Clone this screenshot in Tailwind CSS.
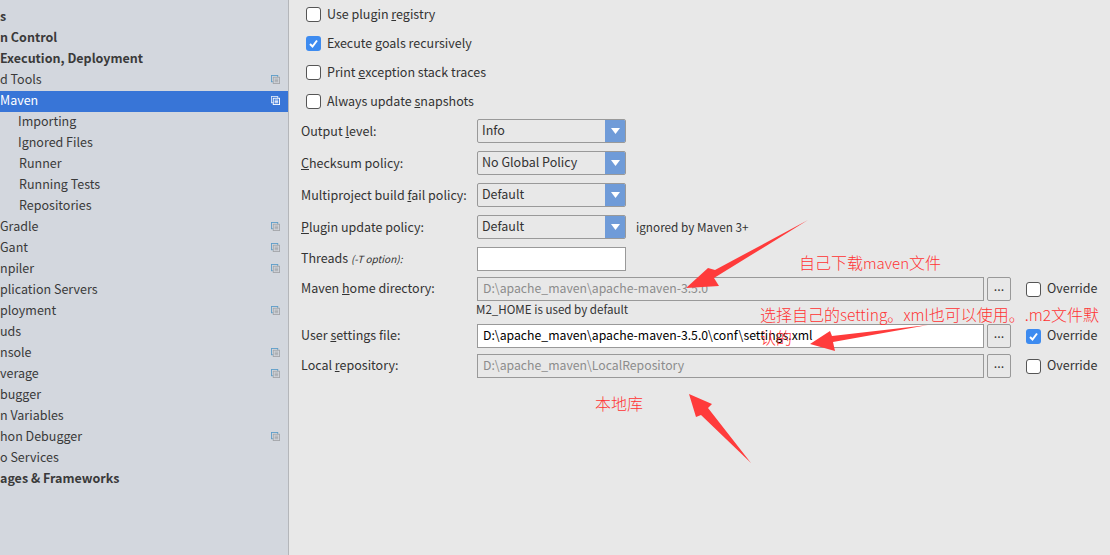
<!DOCTYPE html>
<html lang="en">
<head>
    <meta charset="UTF-8">
    <title>Maven Settings</title>
    <script src="https://cdn.jsdelivr.net/npm/@tailwindcss/browser@4"></script>
</head>
<body class="relative w-[1110px] h-[555px] overflow-hidden bg-[#e8e8e8] text-[12.5px] text-[#333] font-['Noto_Sans_CJK_SC','Noto_Sans',sans-serif]">
    <svg class="hidden">
        <symbol id="copy" viewBox="0 0 10 10">
            <rect x="0.5" y="0.5" width="7" height="7" fill="none" stroke="#5e9ec9"></rect>
            <rect x="2.5" y="2.5" width="7" height="7" fill="#d3d7de" stroke="#a3a6aa"></rect>
            <path d="M4 4.5h4M4 6h4M4 7.5h4" stroke="#a3a6aa"></path>
        </symbol>
    </svg>
    <div class="flex h-full">
        <!-- settings tree -->
        <aside class="w-[289px] h-full shrink-0 pt-[7px] bg-[#d3d7de] border-r border-[#b4b6ba] overflow-hidden leading-[18px] text-[#3a3a3a]">
            <div class="h-[21px] font-bold">s</div>
            <div class="h-[21px] font-bold">n Control</div>
            <div class="h-[21px] font-bold">Execution, Deployment</div>
            <div class="h-[21px] flex justify-between pr-[8px]"><span>d Tools</span><svg class="w-[9px] h-[9px] mt-[5px]"><use href="#copy"></use></svg></div>
            <div class="h-[21px] flex justify-between pr-[8px] bg-[#3875d7] text-white">
                <span>Maven</span>
                <svg class="w-[9px] h-[9px] mt-[5px]" viewBox="0 0 10 10"><rect x="0.5" y="0.5" width="7" height="7" fill="none" stroke="#dbe6f7"></rect><rect x="2.5" y="2.5" width="7" height="7" fill="#3875d7" stroke="#fff"></rect><path d="M4 4.5h4M4 6h4M4 7.5h4" stroke="#fff"></path></svg>
            </div>
            <div class="h-[21px] pl-[18px]">Importing</div>
            <div class="h-[21px] pl-[18px]">Ignored Files</div>
            <div class="h-[21px] pl-[19px]">Runner</div>
            <div class="h-[21px] pl-[19px]">Running Tests</div>
            <div class="h-[21px] pl-[19px]">Repositories</div>
            <div class="h-[21px] flex justify-between pr-[8px]"><span>Gradle</span><svg class="w-[9px] h-[9px] mt-[5px]"><use href="#copy"></use></svg></div>
            <div class="h-[21px] flex justify-between pr-[8px]"><span>Gant</span><svg class="w-[9px] h-[9px] mt-[5px]"><use href="#copy"></use></svg></div>
            <div class="h-[21px] flex justify-between pr-[8px]"><span>npiler</span><svg class="w-[9px] h-[9px] mt-[5px]"><use href="#copy"></use></svg></div>
            <div class="h-[21px]">plication Servers</div>
            <div class="h-[21px] flex justify-between pr-[8px]"><span>ployment</span><svg class="w-[9px] h-[9px] mt-[5px]"><use href="#copy"></use></svg></div>
            <div class="h-[21px]">uds</div>
            <div class="h-[21px] flex justify-between pr-[8px]"><span>nsole</span><svg class="w-[9px] h-[9px] mt-[5px]"><use href="#copy"></use></svg></div>
            <div class="h-[21px] flex justify-between pr-[8px]"><span>verage</span><svg class="w-[9px] h-[9px] mt-[5px]"><use href="#copy"></use></svg></div>
            <div class="h-[21px]">bugger</div>
            <div class="h-[21px]">n Variables</div>
            <div class="h-[21px] flex justify-between pr-[8px]"><span>hon Debugger</span><svg class="w-[9px] h-[9px] mt-[5px]"><use href="#copy"></use></svg></div>
            <div class="h-[21px]">o Services</div>
            <div class="h-[21px] font-bold">ages &amp; Frameworks</div>
        </aside>

        <!-- maven form -->
        <main class="flex-1 pl-[12px] leading-[20px]">
            <div class="flex items-center h-[29px] pl-[5px] gap-[6px]"><span class="w-[15px] h-[15px] rounded-[3px] border border-[#555] bg-white"></span><span class="-mt-[1px]">Use plugin <u>r</u>egistry</span></div>
            <div class="flex items-center h-[29px] pl-[5px] gap-[6px]">
                <span class="w-[15px] h-[15px] rounded-[3px] bg-[#3d8bf0] flex items-center justify-center"><svg class="w-[11px] h-[11px]" viewBox="0 0 11 11"><path d="M2 6l2.5 2.5L9 2.5" fill="none" stroke="#fff" stroke-width="2"></path></svg></span>
                <span class="-mt-[1px]">Execute <u>g</u>oals recursively</span>
            </div>
            <div class="flex items-center h-[29px] pl-[5px] gap-[6px]"><span class="w-[15px] h-[15px] rounded-[3px] border border-[#555] bg-white"></span><span class="-mt-[1px]">Print <u>e</u>xception stack traces</span></div>
            <div class="flex items-center h-[29px] pl-[5px] gap-[6px]"><span class="w-[15px] h-[15px] rounded-[3px] border border-[#555] bg-white"></span><span class="-mt-[1px]">Always update <u>s</u>napshots</span></div>

            <div class="flex flex-col gap-[8px] mt-[3px]">
                <div class="flex items-center h-[24px]">
                    <span class="w-[176px]">Output <u>l</u>evel:</span>
                    <div class="flex w-[149px] h-[24px] rounded-[2px] border border-[#999] overflow-hidden"><span class="flex-1 pl-[4px] leading-[20px]">Info</span><span class="w-[20px] bg-[#6f9bd8] flex items-center justify-center"><svg class="w-[9px] h-[6px]" viewBox="0 0 9 6"><path d="M0 0h9L4.500 6z" fill="#fff"></path></svg></span></div>
                </div>
                <div class="flex items-center h-[24px]">
                    <span class="w-[176px]"><u>C</u>hecksum policy:</span>
                    <div class="flex w-[149px] h-[24px] rounded-[2px] border border-[#999] overflow-hidden"><span class="flex-1 pl-[4px] leading-[20px]">No Global Policy</span><span class="w-[20px] bg-[#6f9bd8] flex items-center justify-center"><svg class="w-[9px] h-[6px]" viewBox="0 0 9 6"><path d="M0 0h9L4.500 6z" fill="#fff"></path></svg></span></div>
                </div>
                <div class="flex items-center h-[24px]">
                    <span class="w-[176px]">Multiproject build <u>f</u>ail policy:</span>
                    <div class="flex w-[149px] h-[24px] rounded-[2px] border border-[#999] overflow-hidden"><span class="flex-1 pl-[4px] leading-[20px]">Default</span><span class="w-[20px] bg-[#6f9bd8] flex items-center justify-center"><svg class="w-[9px] h-[6px]" viewBox="0 0 9 6"><path d="M0 0h9L4.500 6z" fill="#fff"></path></svg></span></div>
                </div>
                <div class="flex items-center h-[24px]">
                    <span class="w-[176px]"><u>P</u>lugin update policy:</span>
                    <div class="flex w-[149px] h-[24px] rounded-[2px] border border-[#999] overflow-hidden"><span class="flex-1 pl-[4px] leading-[20px]">Default</span><span class="w-[20px] bg-[#6f9bd8] flex items-center justify-center"><svg class="w-[9px] h-[6px]" viewBox="0 0 9 6"><path d="M0 0h9L4.500 6z" fill="#fff"></path></svg></span></div>
                    <span class="ml-[10px] text-[11.75px]">ignored by Maven 3+</span>
                </div>
                <div class="flex items-center h-[24px]">
                    <span class="w-[176px] -mt-[2px]">Threads <i class="text-[10px]">(-T option):</i></span>
                    <div class="w-[149px] h-[24px] border border-[#999] bg-white"></div>
                </div>
            </div>

            <div class="flex items-center h-[24px] mt-[6px]">
                <span class="w-[176px] -mt-[2px]">Maven <u>h</u>ome directory:</span>
                <div class="w-[507px] h-[24px] border border-[#999] pl-[5px] text-[12.25px] leading-[21px] text-[#8c8c8c]">D:\apache_maven\apache-maven-3.5.0</div>
                <div class="w-[24px] h-[24px] ml-[3px] rounded-[2px] border border-[#999] text-center leading-[16px]">...</div>
                <span class="w-[15px] h-[15px] ml-[15px] rounded-[3px] border border-[#555] bg-white"></span>
                <span class="ml-[6px] -mt-[2px]">Override</span>
            </div>
            <div class="h-[23px] pl-[175px] text-[11.6px] leading-[16px]">M2_HOME is used by default</div>
            <div class="flex items-center h-[24px]">
                <span class="w-[176px] -mt-[2px]">User <u>s</u>ettings file:</span>
                <div class="w-[507px] h-[24px] border border-[#999] bg-white pl-[5px] text-[12.25px] leading-[21px] text-black">D:\apache_maven\apache-maven-3.5.0\conf\settings.xml</div>
                <div class="w-[24px] h-[24px] ml-[3px] rounded-[2px] border border-[#999] text-center leading-[16px]">...</div>
                <span class="w-[15px] h-[15px] ml-[15px] rounded-[3px] bg-[#3d8bf0] flex items-center justify-center"><svg class="w-[11px] h-[11px]" viewBox="0 0 11 11"><path d="M2 6l2.500 2.500L9 2.500" fill="none" stroke="#fff" stroke-width="2"></path></svg></span>
                <span class="ml-[6px] -mt-[2px]">Override</span>
            </div>
            <div class="flex items-center h-[24px] mt-[6px]">
                <span class="w-[176px] -mt-[2px]">Local <u>r</u>epository:</span>
                <div class="w-[507px] h-[24px] border border-[#999] pl-[5px] text-[12.25px] leading-[21px] text-[#8c8c8c]">D:\apache_maven\LocalRepository</div>
                <div class="w-[24px] h-[24px] ml-[3px] rounded-[2px] border border-[#999] text-center leading-[16px]">...</div>
                <span class="w-[15px] h-[15px] ml-[15px] rounded-[3px] border border-[#555] bg-white"></span>
                <span class="ml-[6px] -mt-[2px]">Override</span>
            </div>
        </main>
    </div>

    <!-- red annotations drawn over the screenshot -->
    <svg class="absolute inset-0 w-[1110px] h-[555px] pointer-events-none" viewBox="0 0 1110 555">
        <polygon fill="#ff3b3b" points="808,220 715,270 708,268 686,288 719,286 714,278"></polygon>
        <polygon fill="#ff3b3b" points="928,325 832,336 830,331 810,344 835,351 833,342"></polygon>
        <polygon fill="#ff3b3b" points="751,463 708,408 712,404 689,394 696,417 701,415"></polygon>
    </svg>
    <div class="absolute left-[799px] top-[251px] text-[16px] font-light leading-[22px] text-[#f33] whitespace-nowrap">自己下载<span class="text-[15px]">maven</span>文件</div>
    <div class="absolute left-[760px] top-[303px] w-[342px] text-[16px] font-light leading-[23px] text-[#f33]">选择自己的<span class="text-[15.5px]">setting</span>。<span class="text-[15.5px]">xml</span>也可以使用。.<span class="text-[15.5px]">m2</span>文件默认的</div>
    <div class="absolute left-[595px] top-[392px] text-[16px] font-light leading-[22px] text-[#f33]">本地库</div>
</body>
</html>
